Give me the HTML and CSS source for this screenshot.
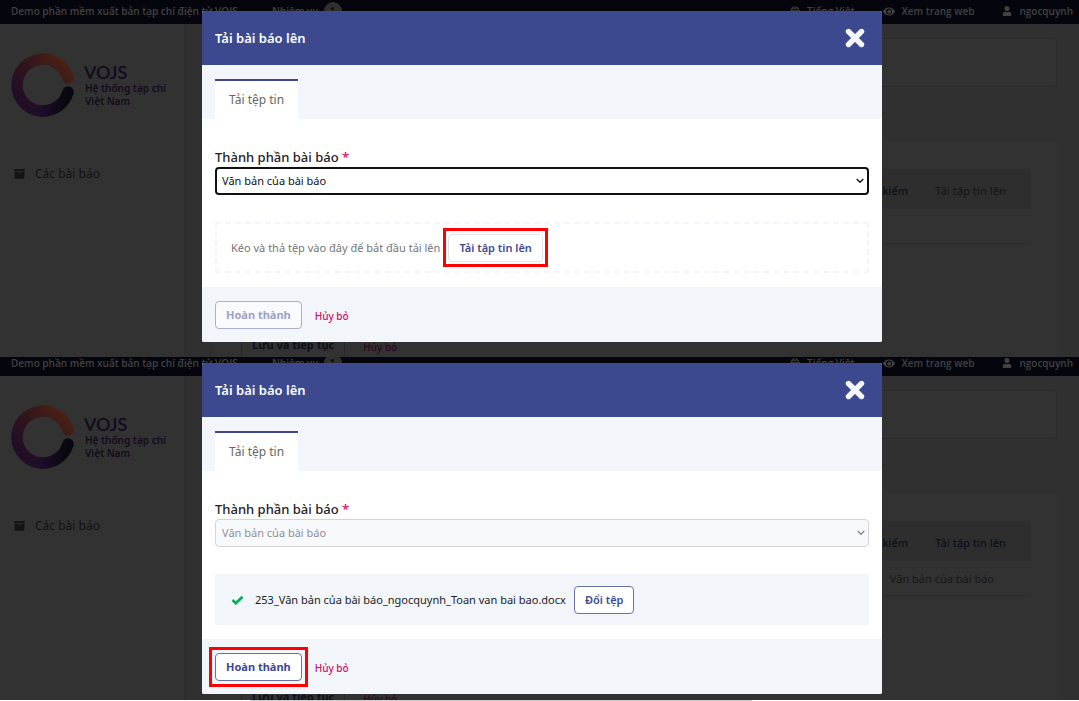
FILE: index.html
```html
<!DOCTYPE html>
<html lang="vi">
<head>
<meta charset="utf-8">
<meta name="viewport" content="width=device-width, initial-scale=1">
<title>Tải bài báo lên</title>
<link rel="stylesheet" href="styles.css">
</head>
<body>
<svg width="0" height="0" class="defs" aria-hidden="true">
  <defs>
    <linearGradient id="arc-warm" x1="0" y1="1" x2="1" y2="0">
      <stop offset="0" stop-color="#1c0c28"/><stop offset=".5" stop-color="#2f141f"/><stop offset="1" stop-color="#4f2311"/>
    </linearGradient>
    <linearGradient id="arc-cool" x1="0" y1="0" x2="1" y2="0">
      <stop offset="0" stop-color="#1d0c2a"/><stop offset=".55" stop-color="#110a1c"/><stop offset="1" stop-color="#08070d"/>
    </linearGradient>
    <symbol id="logo" viewBox="0 0 64 64">
      <path d="M31 58A26 26 0 0 1 6 32A26 26 0 0 1 57 25" fill="none" stroke="url(#arc-warm)" stroke-width="11.500" stroke-linecap="round"/>
      <path d="M57 39A26 26 0 0 1 31 58" fill="none" stroke="url(#arc-cool)" stroke-width="11.500" stroke-linecap="round"/>
    </symbol>
    <symbol id="globe" viewBox="0 0 16 16">
      <circle cx="8" cy="8" r="7.5" fill="currentColor"/>
      <path d="M0 5.5h16M0 10.500h16M8 0v16M8 .5C3.500 4 3.500 12 8 15.500C12.500 12 12.500 4 8 .5" fill="none" stroke="#05060d" stroke-width="1"/>
    </symbol>
    <symbol id="eye" viewBox="0 0 576 512">
      <path fill="currentColor" fill-rule="evenodd" d="M572 241C518 136 411 64 288 64S58 136 4 241a32 32 0 0 0 0 30c54 105 161 177 284 177s230-72 284-177a32 32 0 0 0 0-30zM288 400a144 144 0 1 1 144-144 144 144 0 0 1-144 144zm0-240a95 95 0 0 0-25 4 48 48 0 0 1-67 67 96 96 0 1 0 92-71z"/>
    </symbol>
    <symbol id="user" viewBox="0 0 448 512">
      <path fill="currentColor" d="M224 256a128 128 0 1 0 0-256 128 128 0 0 0 0 256zm90 32h-17a174 174 0 0 1-146 0h-17A134 134 0 0 0 0 422v42a48 48 0 0 0 48 48h352a48 48 0 0 0 48-48v-42a134 134 0 0 0-134-134z"/>
    </symbol>
    <symbol id="archive" viewBox="0 0 512 448">
      <path fill="currentColor" fill-rule="evenodd" d="M32 416a32 32 0 0 0 32 32h384a32 32 0 0 0 32-32V128H32zM192 204q0-12 12-12h104q12 0 12 12v8q0 12-12 12H204q-12 0-12-12zM480 0H32A32 32 0 0 0 0 32v48q0 16 16 16h480q16 0 16-16V32a32 32 0 0 0-32-32z"/>
    </symbol>
    <symbol id="close" viewBox="0 0 20 20">
      <path d="M3.500 3.500l13 13M16.500 3.500l-13 13" fill="none" stroke="currentColor" stroke-width="5.400" stroke-linecap="round"/>
    </symbol>
    <symbol id="check" viewBox="0 0 13 10">
      <path d="M1.500 5l3.300 3.200L11.500 1.700" fill="none" stroke="currentColor" stroke-width="2.700"/>
    </symbol>
  </defs>
</svg>

<section class="frame">
  <header class="topbar">
    <span class="site">Demo phần mềm xuất bản tạp chí điện tử VOJS</span>
    <span class="tasks">Nhiệm vụ <span class="count">1</span></span>
    <nav class="tools">
      <a href="#"><svg class="ico-round"><use href="#globe"/></svg>Tiếng Việt</a>
      <a href="#"><svg class="ico-wide"><use href="#eye"/></svg>Xem trang web</a>
      <a href="#"><svg class="ico-round"><use href="#user"/></svg>ngocquynh</a>
    </nav>
  </header>
  <div class="shell">
    <aside class="side">
      <div class="brand">
        <svg class="logo"><use href="#logo"/></svg>
        <div class="brand-text"><strong>VOJS</strong><span>Hệ thống tạp chí</span><span>Việt Nam</span></div>
      </div>
      <a class="side-link" href="#"><svg><use href="#archive"/></svg>Các bài báo</a>
    </aside>
    <main class="main">
      <div class="card"></div>
      <div class="panel">
        <div class="files">
          <div class="files-head"><a href="#">Tìm kiếm</a><span class="muted">Tải tập tin lên</span></div>
          <div class="files-row"></div>
        </div>
        <div class="form-actions"><button class="save" type="button">Lưu và tiếp tục</button><a class="cancel dim" href="#">Hủy bỏ</a></div>
      </div>
    </main>
  </div>

  <div class="modal" role="dialog" aria-labelledby="title-1">
    <div class="modal-head"><h2 id="title-1">Tải bài báo lên</h2><button class="close" type="button" aria-label="Đóng"><svg><use href="#close"/></svg></button></div>
    <div class="tabs"><a class="tab" href="#">Tải tệp tin</a></div>
    <div class="modal-body">
      <label for="part-1">Thành phần bài báo <span class="req">*</span></label>
      <select id="part-1" class="select active"><option>Văn bản của bài báo</option></select>
      <div class="drop"><span>Kéo và thả tệp vào đây để bắt đầu tải lên</span><span class="marked"><button class="btn faint" type="button">Tải tập tin lên</button></span></div>
    </div>
    <div class="modal-foot"><button class="btn strong" type="button" disabled>Hoàn thành</button><a class="cancel" href="#">Hủy bỏ</a></div>
  </div>
</section>

<section class="frame second">
  <header class="topbar">
    <span class="site">Demo phần mềm xuất bản tạp chí điện tử VOJS</span>
    <span class="tasks">Nhiệm vụ <span class="count">1</span></span>
    <nav class="tools">
      <a href="#"><svg class="ico-round"><use href="#globe"/></svg>Tiếng Việt</a>
      <a href="#"><svg class="ico-wide"><use href="#eye"/></svg>Xem trang web</a>
      <a href="#"><svg class="ico-round"><use href="#user"/></svg>ngocquynh</a>
    </nav>
  </header>
  <div class="shell">
    <aside class="side">
      <div class="brand">
        <svg class="logo"><use href="#logo"/></svg>
        <div class="brand-text"><strong>VOJS</strong><span>Hệ thống tạp chí</span><span>Việt Nam</span></div>
      </div>
      <a class="side-link" href="#"><svg><use href="#archive"/></svg>Các bài báo</a>
    </aside>
    <main class="main">
      <div class="card"></div>
      <div class="panel">
        <div class="files">
          <div class="files-head"><a href="#">Tìm kiếm</a><a href="#">Tải tập tin lên</a></div>
          <div class="files-row">Văn bản của bài báo</div>
        </div>
        <div class="form-actions"><button class="save" type="button">Lưu và tiếp tục</button><a class="cancel dim" href="#">Hủy bỏ</a></div>
      </div>
    </main>
  </div>

  <div class="modal" role="dialog" aria-labelledby="title-2">
    <div class="modal-head"><h2 id="title-2">Tải bài báo lên</h2><button class="close" type="button" aria-label="Đóng"><svg><use href="#close"/></svg></button></div>
    <div class="tabs"><a class="tab" href="#">Tải tệp tin</a></div>
    <div class="modal-body">
      <label for="part-2">Thành phần bài báo <span class="req">*</span></label>
      <select id="part-2" class="select" disabled><option>Văn bản của bài báo</option></select>
      <div class="drop done"><svg class="check"><use href="#check"/></svg><span>253_Văn bản của bài báo_ngocquynh_Toan van bai bao.docx</span><button class="btn" type="button">Đổi tệp</button></div>
    </div>
    <div class="modal-foot"><span class="marked"><button class="btn strong" type="button">Hoàn thành</button></span><a class="cancel" href="#">Hủy bỏ</a></div>
  </div>
</section>
<div class="edge"></div>
</body>
</html>
```
FILE: styles.css
```css
* { box-sizing: border-box; }

body {
  margin: 0;
  height: 100vh;
  display: grid;
  grid-template-rows: 357fr 343fr 1px;
  background: #fff;
  font: 11px/18px "Noto Sans", sans-serif;
}

a { text-decoration: none; color: inherit; }
button, select { font: inherit; margin: 0; }
svg { flex: none; display: block; }
.defs { position: absolute; }

.frame { position: relative; overflow: hidden; min-height: 0; background: #303030; }

/* Dimmed page */
.topbar {
  display: flex;
  align-items: center;
  height: 24px;
  padding: 0 6px 2px 11px;
  background: #05060d;
  color: #424242;
  font: 600 10px/16px "Open Sans", sans-serif;
}
.second .topbar { height: 19px; padding-bottom: 5px; align-items: flex-end; }
.site { width: 261px; white-space: nowrap; }
.tasks { display: flex; align-items: center; gap: 5px; height: 16px; white-space: nowrap; }
.count {
  width: 18px;
  height: 18px;
  border-radius: 50%;
  background: #303030;
  color: #05060d;
  text-align: center;
  line-height: 18px;
}
.tools { display: flex; gap: 28px; margin-left: auto; }
.tools a { display: flex; align-items: center; gap: 7px; }
.ico-round { width: 10px; height: 10px; }
.ico-wide { width: 12px; height: 11px; }

.shell { display: grid; grid-template-columns: 185px 1fr; min-height: 340px; }
.side { padding: 29px 0 0 11px; background: #323232; border-right: 1px solid #2b2b2b; }
.brand { display: flex; gap: 9px; }
.logo { width: 64px; height: 64px; }
.brand-text {
  display: flex;
  flex-direction: column;
  padding-top: 9px;
  color: #140a1e;
  font-size: 10px;
  font-weight: 600;
  line-height: 13px;
  white-space: nowrap;
}
.brand-text strong { font: 600 18px/20px Lato, sans-serif; }
.brand-text span { padding-left: 1px; }
.side-link { display: flex; align-items: center; gap: 10px; margin-top: 48px; padding-left: 3px; color: #121212; font-size: 12px; }
.side-link svg { width: 11px; height: 10px; }

.main { padding: 14px 22px 0 28px; }
.card { height: 49px; background: #323232; border: 1px solid #2c2c2c; border-radius: 3px; }
.panel { margin-top: 54px; min-height: 240px; padding: 28px 26px 0; background: #323232; }
.files { border-bottom: 1px solid #292929; }
.files-head {
  display: flex;
  align-items: center;
  justify-content: flex-end;
  gap: 27px;
  height: 40px;
  padding: 4px 25px 0;
  background: #2e2e2e;
  color: #0c0e1c;
  font-weight: 500;
}
.muted { color: #181818; }
.files-row { height: 34px; padding: 9px 37px 0; text-align: right; color: #181818; }
.form-actions { display: flex; align-items: center; gap: 18px; margin-top: 87px; padding-left: 2px; }
.save {
  height: 28px;
  padding: 0 10px;
  border: 1px solid #242630;
  border-radius: 3px;
  background: none;
  color: #0c0e1c;
  font-weight: 700;
}

/* Dialog */
.modal {
  position: absolute;
  top: 11px;
  left: 202px;
  right: 197px;
  border-radius: 2px;
  overflow: hidden;
  background: #fff;
  color: #222;
}
.second .modal { top: 6px; }
.modal-head {
  display: flex;
  align-items: center;
  justify-content: space-between;
  height: 54px;
  padding: 0 17px 0 13px;
  background: #3c498f;
  color: #fff;
}
.modal-head h2 { margin: 0; font-size: 13px; font-weight: 600; line-height: 20px; }
.close { padding: 0; border: 0; background: none; color: #f3f6fc; }
.close svg { width: 20px; height: 20px; }
.tabs { display: flex; padding: 14px 13px 0; background: #f2f5fa; }
.tab {
  height: 40px;
  padding: 10px 14px 0;
  border-top: 2px solid #3c498f;
  background: #fff;
  color: #666;
  font-size: 12px;
}
.modal-body { display: flex; flex-direction: column; padding: 28px 13px 14px; }
.modal-body label { font-size: 13px; font-weight: 500; line-height: 20px; }
.req { color: #d00a6c; }
.select {
  appearance: none;
  width: 100%;
  height: 28px;
  padding: 0 6px;
  border: 1px solid #d5d5d5;
  border-radius: 4px;
  background: #fff url("data:image/svg+xml,%3Csvg xmlns='http://www.w3.org/2000/svg' width='8' height='6'%3E%3Cpath d='M.7 1l3.300 3.300L7.300 1' fill='none' stroke='%23111' stroke-width='1.300'/%3E%3C/svg%3E") no-repeat right 3px center;
  color: #111;
}
.select.active { border: 2px solid #111; padding: 0 5px; background-position-x: right 2px; }
.select:disabled {
  background-color: #f8f9fd;
  background-image: url("data:image/svg+xml,%3Csvg xmlns='http://www.w3.org/2000/svg' width='8' height='6'%3E%3Cpath d='M.7 1l3.300 3.300L7.300 1' fill='none' stroke='%23888' stroke-width='1.300'/%3E%3C/svg%3E");
  color: #8f8f92;
  opacity: 1;
}
.drop {
  display: flex;
  align-items: center;
  gap: 8px;
  height: 51px;
  margin-top: 27px;
  padding-left: 14px;
  border: 2px dashed #f2f5fa;
  color: #757575;
  white-space: nowrap;
}
.done { border-style: solid; background: #f2f5fa; color: #222; }
.check { width: 13px; height: 10px; margin-right: 3px; color: #00b24e; }
.btn {
  height: 28px;
  padding: 0 10px;
  border: 1px solid #6670a9;
  border-radius: 4px;
  background: #fff;
  color: #3c498f;
  font-weight: 600;
}
.btn.faint { border-color: #e2e3e8; }
.btn.strong { font-weight: 700; }
.btn:disabled { border-color: #a9b0d0; background: #f9fafd; color: #9aa2c8; }
.modal-foot { display: flex; align-items: center; gap: 13px; height: 55px; padding: 0 13px; background: #f2f5fa; }
.cancel { padding-top: 3px; color: #d00a6c; font-size: 10px; font-weight: 500; }
.dim { color: #2d061a; }

/* Red highlight around the control to press */
.marked { position: relative; display: flex; }
.marked::after {
  content: "";
  position: absolute;
  inset: -6px -5px -5px;
  border: 3px solid #f00;
  pointer-events: none;
}
.modal-foot .marked::after { inset: -6px; }

.edge { width: 502px; max-width: 70%; margin-left: 250px; background: #ccc; }
```
